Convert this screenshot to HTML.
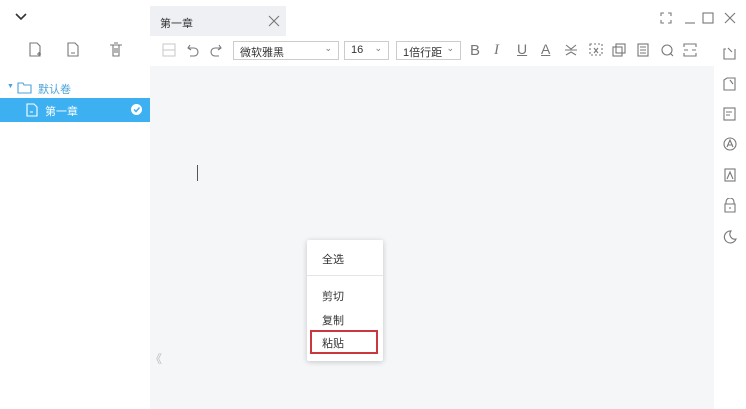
<!DOCTYPE html>
<html><head><meta charset="utf-8"><style>
*{margin:0;padding:0;box-sizing:border-box}
body{width:746px;height:409px;overflow:hidden;background:#fff;font-family:"Liberation Sans","Noto Sans CJK SC",sans-serif;position:relative;font-size:11px;color:#333}
.a{position:absolute}
svg{position:absolute;fill:none;stroke:#777;stroke-width:1.1}
.sel{border:1px solid #ccc;height:19px;top:41px;background:#fff;font-size:11px;padding:2px 6px;color:#333}
.sel span{position:absolute;right:6px;top:1px;font-size:9px;color:#777}
</style></head><body>
<div class="a" style="left:150px;top:66px;width:564px;height:343px;background:#f4f6f8"></div>
<div class="a" style="left:150px;top:6px;width:136px;height:30px;background:#eef0f3"></div>
<div class="a" style="left:160px;top:15px;font-size:11px;color:#333">第一章</div>
<svg style="left:268px;top:15px" width="12" height="12"><path d="M1 1L11 11M11 1L1 11"/></svg>
<svg style="left:14px;top:13px" width="14" height="8"><path d="M2 1L7 6L12 1" stroke="#333" stroke-width="1.6"/></svg>
<!-- sidebar icons -->
<svg style="left:28px;top:42px" width="14" height="16"><path d="M2 1H9L12 4V14H2Z M9 12H13M11 10V14"/></svg>
<svg style="left:66px;top:42px" width="14" height="16"><path d="M2 1H9L12 4V14H2Z M5 11H9"/></svg>
<svg style="left:109px;top:42px" width="14" height="16"><path d="M1 3H13M4 3V14H10V3M5 1H9M6 6V11M8 6V11"/></svg>
<div class="a" style="left:7px;top:83px;font-size:7px;color:#4aa3d8">▼</div>
<svg style="left:17px;top:81px" width="16" height="14"><path d="M1 2H6L7 4H14V12H1Z" stroke="#4aa3d8"/></svg>
<div class="a" style="left:38px;top:81px;color:#4aa3d8;font-size:11px">默认卷</div>
<div class="a" style="left:0;top:98px;width:150px;height:24px;background:#3cb0f0"></div>
<svg style="left:26px;top:103px" width="12" height="14"><path d="M1 1H8L11 4V13H1Z M4 9H7" stroke="#fff"/></svg>
<div class="a" style="left:45px;top:103px;color:#fff;font-size:11px">第一章</div>
<div class="a" style="left:131px;top:104px;width:11px;height:11px;border-radius:50%;background:#fff"></div>
<svg style="left:131px;top:104px" width="11" height="11"><path d="M3 5.5L5 7.5L8.5 3.5" stroke="#3cb0f0" stroke-width="1.5"/></svg>
<!-- window controls -->
<svg style="left:660px;top:12px" width="12" height="12"><path d="M1 4V1H4M8 1H11V4M11 8V11H8M4 11H1V8"/></svg>
<svg style="left:684px;top:12px" width="12" height="12"><path d="M1 11H11"/></svg>
<svg style="left:702px;top:12px" width="12" height="12"><rect x="1" y="1" width="10" height="10"/></svg>
<svg style="left:724px;top:12px" width="12" height="12"><path d="M1 1L11 11M11 1L1 11"/></svg>
<!-- toolbar -->
<svg style="left:162px;top:43px" width="14" height="14"><rect x="1" y="1" width="12" height="12" stroke="#ccc"/><path d="M1 7H13" stroke="#ccc"/></svg>
<svg style="left:186px;top:43px" width="14" height="14"><path d="M4 2L2 5L5 7M2 5H8A4 4 0 0 1 8 13H4"/></svg>
<svg style="left:209px;top:43px" width="14" height="14"><path d="M10 2L12 5L9 7M12 5H6A4 4 0 0 0 6 13H10"/></svg>
<div class="a sel" style="left:233px;width:106px">微软雅黑<span>⌄</span></div>
<div class="a sel" style="left:344px;width:45px">16<span>⌄</span></div>
<div class="a sel" style="left:396px;width:65px">1倍行距<span>⌄</span></div>
<div class="a" style="left:470px;top:42px;font-size:15px;color:#777">B</div>
<div class="a" style="left:494px;top:42px;font-size:15px;color:#777;font-style:italic;font-family:'Liberation Serif'">I</div>
<div class="a" style="left:517px;top:41px;font-size:14px;color:#777;text-decoration:underline">U</div>
<div class="a" style="left:541px;top:41px;font-size:14px;color:#777;text-decoration:underline">A</div>
<svg style="left:564px;top:43px" width="14" height="14"><path d="M2 2L7 6L12 2M1 7H13M2 12L7 9L12 12"/></svg>
<svg style="left:589px;top:43px" width="14" height="14"><rect x="1" y="1" width="12" height="11" stroke-dasharray="2 2"/><path d="M5 5L9 10M9 5L5 10"/></svg>
<svg style="left:612px;top:43px" width="14" height="14"><rect x="4" y="1" width="9" height="9"/><rect x="1" y="4" width="9" height="9"/></svg>
<svg style="left:636px;top:43px" width="14" height="14"><rect x="2" y="1" width="10" height="12"/><path d="M4 4H10M4 7H10M4 10H10"/></svg>
<svg style="left:660px;top:43px" width="14" height="14"><circle cx="7" cy="7" r="5"/><path d="M10 10L13 13"/></svg>
<svg style="left:683px;top:43px" width="14" height="14"><path d="M1 4V1H13V4M1 10V13H13V10M1 7H5M9 7H13"/></svg>
<!-- right panel -->
<svg style="left:723px;top:46px" width="14" height="14"><path d="M3 3H1V13H12V3M5 2L9 6"/></svg>
<svg style="left:723px;top:77px" width="14" height="14"><path d="M1 3V13H12V1H4Z M7 3L10 7"/></svg>
<svg style="left:723px;top:107px" width="14" height="14"><rect x="1" y="1" width="11" height="12"/><path d="M3 5H9M3 8H7"/></svg>
<svg style="left:723px;top:137px" width="15" height="15"><circle cx="7" cy="7" r="6"/><path d="M4 10L7 3L10 10M5 8H9"/></svg>
<svg style="left:723px;top:168px" width="14" height="14"><rect x="2" y="1" width="10" height="12"/><path d="M4 11L7 4L10 11"/></svg>
<svg style="left:723px;top:198px" width="14" height="15"><path d="M3 6V4A4 4 0 0 1 11 4V6M2 6H12V14H2Z M7 9V11"/></svg>
<svg style="left:723px;top:229px" width="14" height="15"><path d="M8 2A6 6 0 1 0 13 10A5 5 0 0 1 8 2Z"/></svg>
<div class="a" style="left:197px;top:165px;width:1px;height:16px;background:#555"></div>
<div class="a" style="left:150px;top:350px;font-size:12px;color:#bbb">《</div>
<!-- context menu -->
<div class="a" style="left:307px;top:240px;width:76px;height:121px;background:#fff;box-shadow:0 1px 6px rgba(0,0,0,.2);border-radius:2px"></div>
<div class="a" style="left:322px;top:251px;font-size:11px">全选</div>
<div class="a" style="left:307px;top:275px;width:76px;height:1px;background:#e5e5e5"></div>
<div class="a" style="left:322px;top:288px;font-size:11px">剪切</div>
<div class="a" style="left:322px;top:312px;font-size:11px">复制</div>
<div class="a" style="left:310px;top:330px;width:68px;height:24px;border:2px solid #c8383c"></div>
<div class="a" style="left:322px;top:335px;font-size:11px">粘贴</div>
</body></html>
